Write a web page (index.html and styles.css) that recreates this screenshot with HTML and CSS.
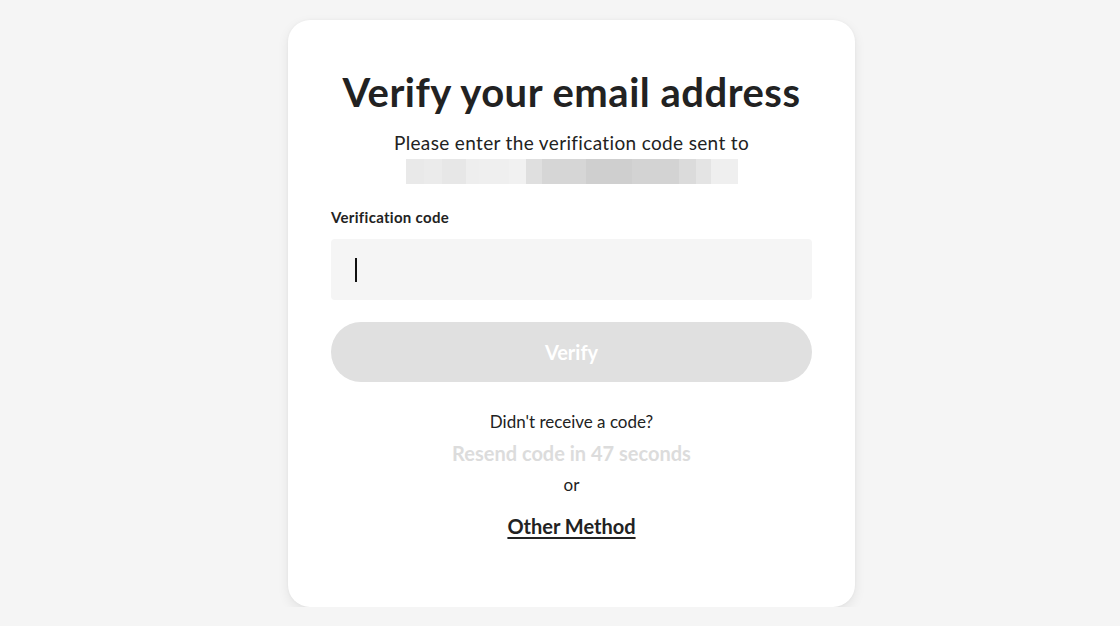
FILE: index.html
```html
<!DOCTYPE html>
<html lang="en">
<head>
<meta charset="utf-8">
<title>Verify your email address</title>
<link rel="stylesheet" href="styles.css">
</head>
<body>
<div class="page">
  <div class="card">
    <h1 class="title">Verify your email address</h1>
    <p class="subtitle">Please enter the verification code sent to</p>
    <div class="masked-email" aria-label="hidden email"></div>
    <label class="label" for="code">Verification code</label>
    <div class="input"><span class="caret"></span></div>
    <button class="verify" type="button">Verify</button>
    <p class="hint">Didn't receive a code?</p>
    <p class="resend">Resend code in 47 seconds</p>
    <p class="or">or</p>
    <a class="other" href="#">Other Method</a>
  </div>
</div>
</body>
</html>
```

FILE: styles.css
```css
* { box-sizing: border-box; }
html, body { margin: 0; padding: 0; }
body {
  background: #f5f5f5;
  font-family: Lato, "Open Sans", sans-serif;
  color: #222;
}
.page {
  display: flex;
  padding: 20px 0 0 288px;
}
.card {
  width: 567px;
  height: 587px;
  background: #fff;
  border-radius: 22px;
  box-shadow: 0 4px 12px rgba(0,0,0,0.08), 0 0 3px rgba(0,0,0,0.04);
  padding: 48px 43px 0;
  display: flex;
  flex-direction: column;
  align-items: center;
}
.title {
  margin: 0;
  font-size: 40px;
  line-height: 48px;
  font-weight: 700;
  letter-spacing: 0.5px;
  color: #222;
  white-space: nowrap;
}
.subtitle {
  margin: 15px 0 0;
  font-size: 19px;
  line-height: 24px;
  letter-spacing: 0.35px;
  color: #222;
}
.masked-email {
  margin-top: 4px;
  width: 332px;
  height: 25px;
  background: linear-gradient(90deg,
    #e9e9e9 0 18px, #ebebeb 18px 36px, #e7e7e7 36px 60px, #eeeeee 60px 73px,
    #efefef 73px 103px, #f1f1f1 103px 120px, #dfdfdf 120px 136px,
    #d6d6d6 136px 180px, #cfcfcf 180px 226px, #d3d3d3 226px 273px,
    #dbdbdb 273px 290px, #e4e4e4 290px 305px, #efefef 305px 332px);
}
.label {
  align-self: stretch;
  margin-top: 23px;
  font-size: 15px;
  line-height: 20px;
  font-weight: 700;
  letter-spacing: 0.3px;
  color: #222;
}
.input {
  align-self: stretch;
  margin-top: 12px;
  height: 61px;
  background: #f5f5f5;
  border-radius: 4px;
  padding: 19px 24px;
  display: flex;
}
.caret {
  width: 1.5px;
  height: 24px;
  background: #111;
}
.verify {
  align-self: stretch;
  margin-top: 22px;
  height: 60px;
  border: 0;
  border-radius: 30px;
  background: #e0e0e0;
  color: #fff;
  font-family: inherit;
  font-size: 20px;
  font-weight: 700;
}
.hint {
  margin: 29px 0 0;
  font-size: 17px;
  line-height: 22px;
  color: #222;
}
.resend {
  margin: 8px 0 0;
  font-size: 20px;
  line-height: 24px;
  font-weight: 700;
  color: #dcdcdc;
}
.or {
  margin: 9px 0 0;
  font-size: 17px;
  line-height: 22px;
  color: #222;
}
.other {
  margin-top: 18px;
  font-size: 20px;
  line-height: 24px;
  font-weight: 700;
  color: #222;
  text-decoration: underline;
  text-underline-offset: 3px;
  text-decoration-thickness: 2px;
}
```
